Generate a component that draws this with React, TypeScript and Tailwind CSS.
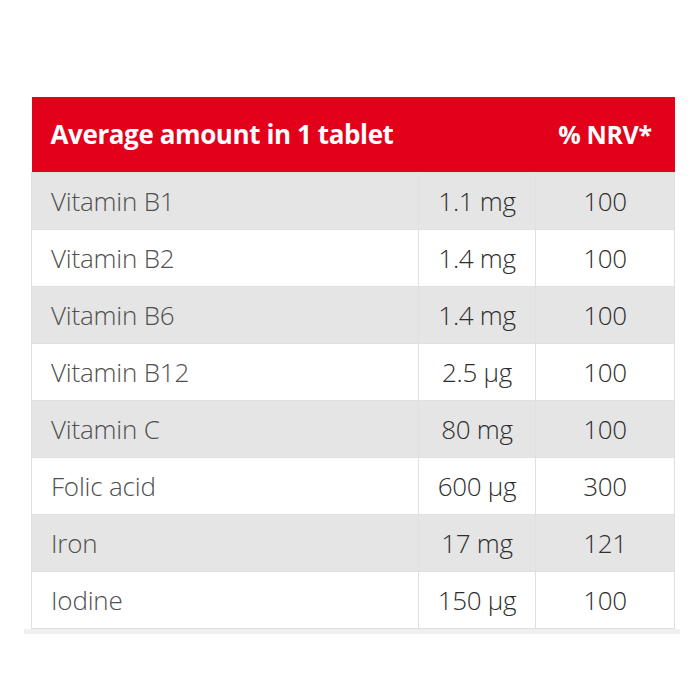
import React from "react";

const rows = [
  { name: "Vitamin B1", amount: "1.1 mg", nrv: "100" },
  { name: "Vitamin B2", amount: "1.4 mg", nrv: "100" },
  { name: "Vitamin B6", amount: "1.4 mg", nrv: "100" },
  { name: "Vitamin B12", amount: "2.5 µg", nrv: "100" },
  { name: "Vitamin C", amount: "80 mg", nrv: "100" },
  { name: "Folic acid", amount: "600 µg", nrv: "300" },
  { name: "Iron", amount: "17 mg", nrv: "121" },
  { name: "Iodine", amount: "150 µg", nrv: "100" },
];

const App = () => {
  return (
    <div className="w-[700px] h-[700px] bg-white pt-[97px] font-['Open_Sans',sans-serif]">
      <div className="ml-[31px] w-[643px]">
        <table className="w-full border-collapse table-fixed">
          <colgroup>
            <col className="w-[387px]" />
            <col className="w-[117px]" />
            <col className="w-[139px]" />
          </colgroup>
          <thead>
            <tr className="bg-[#e2001a] h-[75px] text-white">
              <th colSpan={2} className="text-left pl-[19px] text-[26px] font-bold tracking-[-0.4px]">
                Average amount in 1 tablet
              </th>
              <th className="text-center text-[25px] font-bold tracking-[-0.4px]">% NRV*</th>
            </tr>
          </thead>
          <tbody>
            {rows.map((r, i) => (
              <tr
                key={r.name}
                className={i % 2 === 0 ? "bg-[#e5e5e5] h-[57px]" : "bg-white h-[57px]"}
              >
                <td className="pl-[19px] pt-[2px] text-[26px] font-light text-[#505050] border border-[#e0e0e0] tracking-[-0.2px]">
                  {r.name}
                </td>
                <td className="text-center pt-[2px] text-[26px] font-light text-[#2e2e2e] border border-[#e0e0e0] tracking-[-0.3px]">
                  {r.amount}
                </td>
                <td className="text-center pt-[2px] text-[26px] font-light text-[#2e2e2e] border border-[#e0e0e0] tracking-[-0.3px]">
                  {r.nrv}
                </td>
              </tr>
            ))}
          </tbody>
        </table>
      </div>
      <div className="ml-[24px] w-[656px] h-[5px] bg-[#efefef]" />
    </div>
  );
};

export default App;
